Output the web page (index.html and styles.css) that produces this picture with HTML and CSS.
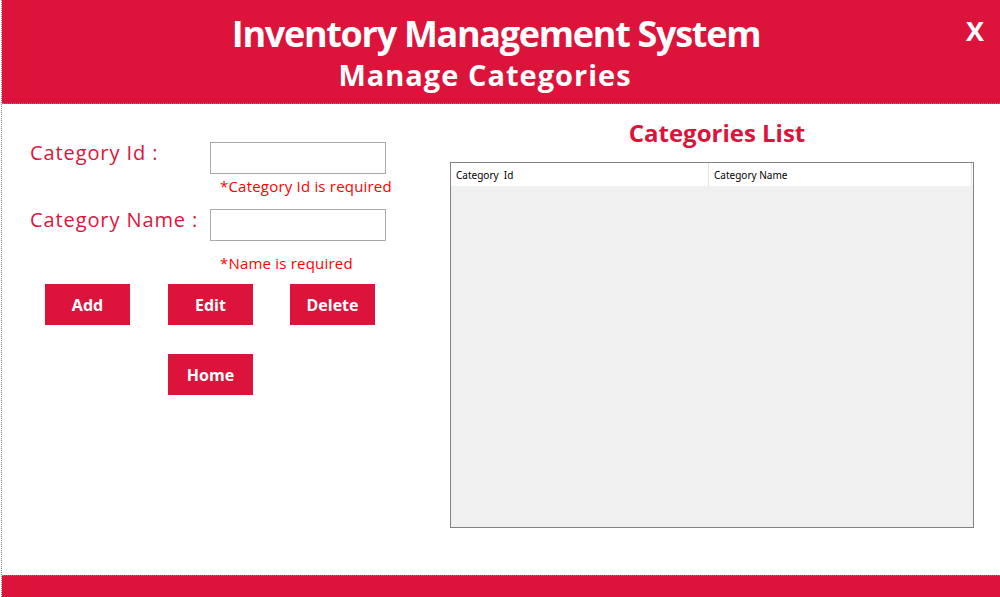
FILE: index.html
```html
<!DOCTYPE html>
<html lang="en">
<head>
<meta charset="utf-8">
<title>Manage Categories</title>
<link rel="stylesheet" href="styles.css">
</head>
<body>
<div class="app">
  <header class="header">
    <div class="header-spacer"></div>
    <div class="titles">
      <h1 class="title">Inventory Management System</h1>
      <h2 class="subtitle">Manage Categories</h2>
    </div>
    <div class="close-cell"><span class="close">X</span></div>
  </header>
  <main class="main">
    <section class="form-panel">
      <div class="field-row row-id">
        <label class="field-label">Category Id :</label>
        <input class="field-input" type="text">
      </div>
      <div class="error err-id">*Category Id is required</div>
      <div class="field-row row-name">
        <label class="field-label">Category Name :</label>
        <input class="field-input" type="text">
      </div>
      <div class="error err-name">*Name is required</div>
      <div class="btn-row">
        <button class="btn">Add</button>
        <button class="btn">Edit</button>
        <button class="btn btn-delete">Delete</button>
      </div>
      <div class="btn-row home-row">
        <button class="btn">Home</button>
      </div>
    </section>
    <section class="list-panel">
      <h3 class="list-title">Categories List</h3>
      <div class="grid">
        <div class="grid-head">
          <div class="grid-cell col-id">Category&nbsp; Id</div>
          <div class="grid-cell col-name">Category Name</div>
        </div>
      </div>
    </section>
  </main>
  <footer class="footer"></footer>
</div>
</body>
</html>
```
FILE: styles.css
```css
* { box-sizing: border-box; }
html, body { margin: 0; padding: 0; background: #fff; }
body { font-family: "Open Sans", "DejaVu Sans", sans-serif; }

.app {
  margin-left: 1px;
  width: 999px;
  height: 597px;
  border-left: 1px dotted #808080;
  display: flex;
  flex-direction: column;
}

.header {
  height: 104px;
  background: #dc143c;
  border-bottom: 1px dotted #808080;
  display: grid;
  grid-template-columns: 1fr auto 1fr;
  padding-top: 14px;
  color: #fff;
}
.titles { display: flex; flex-direction: column; align-items: center; gap: 4px; }
.title {
  margin: 0 10px 0 0;
  font-size: 36px;
  line-height: 40px;
  font-weight: 700;
  letter-spacing: -1.3px;
}
.subtitle {
  margin: 0 32px 0 0;
  font-size: 29px;
  line-height: 34px;
  font-weight: 700;
  letter-spacing: 1px;
}
.close-cell { display: flex; justify-content: flex-end; padding-right: 16px; }
.close { font-size: 27px; line-height: 32px; font-weight: 700; margin-top: 1px; }

.main { flex: 1; display: flex; }

.form-panel { width: 448px; padding: 38px 0 0 28px; }
.field-row { display: flex; align-items: flex-start; }
.field-label {
  width: 180px;
  font-size: 20px;
  line-height: 24px;
  letter-spacing: 0.9px;
  color: #dc143c;
  margin-top: -1px;
  white-space: nowrap;
}
.field-input {
  width: 176px;
  height: 32px;
  border: 1px solid #aaa;
  margin: 0;
  padding: 0 4px;
  font: inherit;
  background: #fff;
}
.error {
  font-size: 15px;
  line-height: 18px;
  letter-spacing: 0.2px;
  color: #f00;
  margin-left: 190px;
}
.err-id { margin-top: 3px; }
.row-name { margin-top: 14px; }
.err-name { margin-top: 13px; }

.btn-row { display: flex; gap: 38px; margin-top: 12px; padding-left: 15px; }
.home-row { margin-top: 29px; padding-left: 138px; }
.btn {
  width: 85px;
  height: 41px;
  border: 0;
  margin: 0;
  padding: 0;
  background: #dc143c;
  color: #fff;
  font-family: inherit;
  font-size: 16px;
  font-weight: 700;
  display: flex;
  align-items: center;
  justify-content: center;
  padding-top: 1px;
}
.btn-delete { margin-left: -1px; }

.list-panel { width: 524px; display: flex; flex-direction: column; }
.list-title {
  margin: 14px 0 0;
  padding-left: 10px;
  text-align: center;
  font-size: 24px;
  line-height: 30px;
  font-weight: 700;
  color: #dc143c;
}
.grid {
  margin-top: 14px;
  height: 366px;
  border: 1px solid #828282;
  background: #f0f0f0;
}
.grid-head { display: flex; height: 23px; background: #fff; }
.grid-cell {
  font-family: "Noto Sans", "DejaVu Sans", sans-serif;
  font-size: 10px;
  line-height: 23px;
  padding: 1px 0 0 5px;
  color: #000;
  border-right: 1px solid #e3e3e3;
}
.col-id { width: 258px; }
.col-name { width: 263px; }

.footer {
  height: 22px;
  background: #dc143c;
  border-top: 1px dotted #808080;
}
```
